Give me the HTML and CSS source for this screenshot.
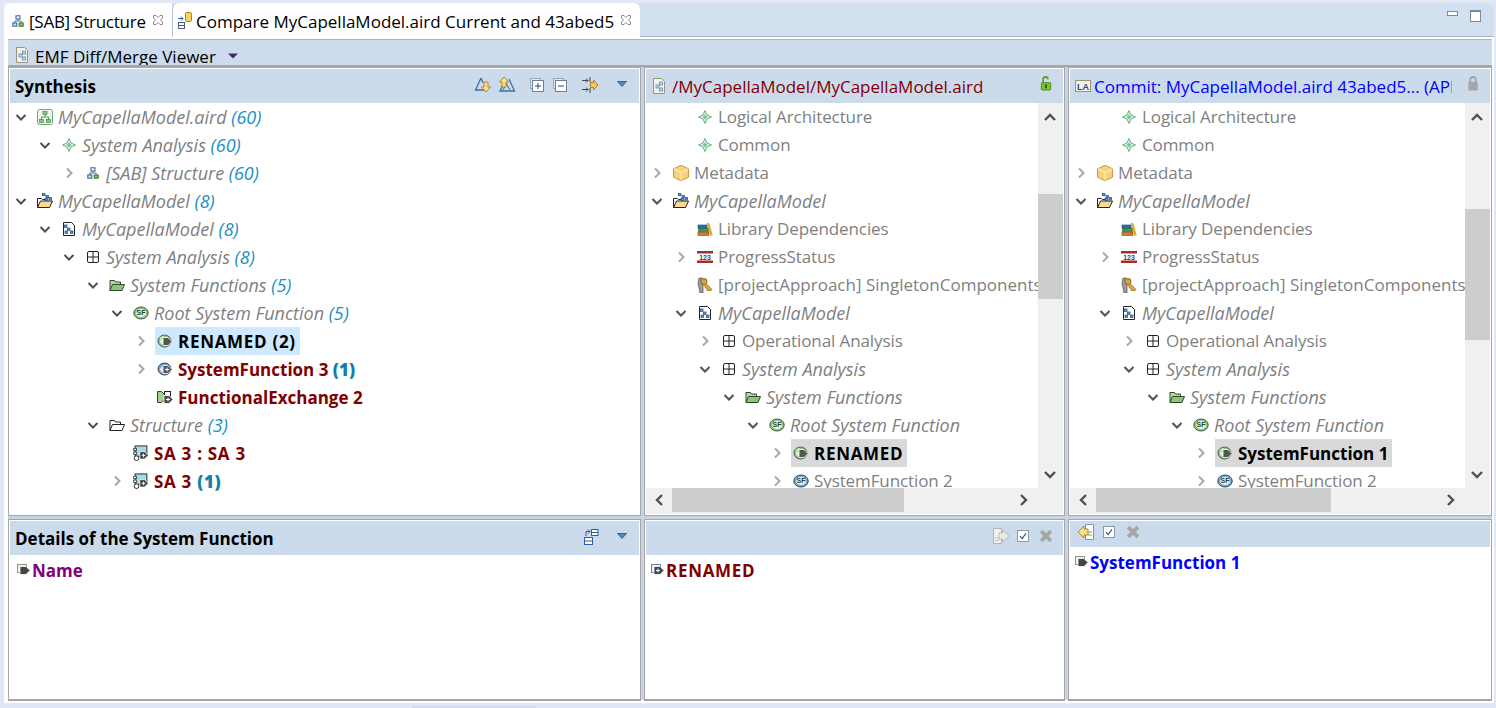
FILE: index.html
```html
<!DOCTYPE html>
<html lang="en">
<head>
    <meta charset="UTF-8">
    <meta name="viewport" content="width=device-width, initial-scale=1.0">
    <title>Compare MyCapellaModel.aird</title>
    <link rel="stylesheet" href="styles.css">
</head>
<body>
<svg class="defs" xmlns="http://www.w3.org/2000/svg">
    <symbol id="tw-open" viewBox="0 0 18 18"><path d="M4.5 7l4.5 4.5L13.5 7" fill="none" stroke="#505050" stroke-width="2"/></symbol>
    <symbol id="tw-closed" viewBox="0 0 18 18"><path d="M7 4.5l4.5 4.5L7 13.5" fill="none" stroke="#a8a8a8" stroke-width="2"/></symbol>
    <symbol id="close" viewBox="0 0 12 12"><path d="M1.5 1.5h2.5L6 3.5l2-2h2.5V4L8.5 6l2 2v2.5H8L6 8.5l-2 2H1.5V8l2-2-2-2z" fill="#fff" stroke="#8a8a8a"/></symbol>
    <symbol id="diagram" viewBox="-2 -2 20 20"><path d="M8 5v3M4 11V8h8v3" fill="none" stroke="#555"/><rect x="5.5" y="1.5" width="5" height="4" fill="#fff" stroke="#2b62a8" stroke-width="1.300"/><rect x="1.5" y="10.5" width="5" height="4" fill="#cfe0f4" stroke="#2b62a8" stroke-width="1.300"/><rect x="9.5" y="10.5" width="5" height="4" fill="#8cc04b" stroke="#3c7a26" stroke-width="1.300"/></symbol>
    <symbol id="compare" viewBox="0 0 16 20"><rect x="8.5" y="1.5" width="6" height="9" rx="1" fill="#f4d35e" stroke="#a8871e"/><rect x="1.5" y="11.5" width="6" height="6" fill="#fff" stroke="#47607e"/><path d="M2 14.5h5" stroke="#47607e"/><path d="M1 7.5h5M4 5.5l2 2-2 2" fill="none" stroke="#2b62a8"/></symbol>
    <symbol id="viewer" viewBox="0 0 16 18"><path d="M2.5 1.5h8l3 3v12h-11z" fill="#f6f3e6" stroke="#9a9478"/><rect x="5" y="8" width="3" height="3" fill="#c3d9ee" stroke="#5c8dbd" stroke-width=".8"/><rect x="8.500" y="5" width="3" height="3" fill="#c3d9ee" stroke="#5c8dbd" stroke-width=".8"/><rect x="8.500" y="11" width="3" height="3" fill="#c3d9ee" stroke="#5c8dbd" stroke-width=".8"/></symbol>
    <symbol id="sync-down" viewBox="0 0 18 18"><path d="M7 2L1.500 14h9" fill="none" stroke="#3a6ea5" stroke-width="1.300"/><path d="M7 2l2 5" stroke="#3a6ea5" stroke-width="1.300"/><path d="M10 6h4v5h2.500L12 16l-4.500-5H10z" fill="#f8dd8a" stroke="#b08a2a"/></symbol>
    <symbol id="sync-up" viewBox="0 0 18 18"><path d="M11 3l5.500 12H2l3-6" fill="none" stroke="#3a6ea5" stroke-width="1.300"/><path d="M8 7L12 14M5 14l4-7" stroke="#3a6ea5"/><path d="M6 1L1.500 6H4v5h4V6h2.500z" fill="#f8dd8a" stroke="#b08a2a"/></symbol>
    <symbol id="expand" viewBox="0 0 14 14"><rect x=".5" y=".5" width="10" height="10" fill="#e6eaf0" stroke="#9aa6b5"/><rect x="2.500" y="2.500" width="11" height="11" fill="#fff" stroke="#6d8097"/><path d="M5 8h6M8 5v6" stroke="#2b4f80"/></symbol>
    <symbol id="collapse" viewBox="0 0 14 14"><rect x=".5" y=".5" width="10" height="10" fill="#e6eaf0" stroke="#9aa6b5"/><rect x="2.500" y="2.500" width="11" height="11" fill="#fff" stroke="#6d8097"/><path d="M5 8h6" stroke="#2b4f80"/></symbol>
    <symbol id="filter-arrows" viewBox="0 0 18 18"><path d="M1 4.500h6M1 13.500h6M9 1v5M9 12v5" stroke="#444" fill="none"/><path d="M5 2.500l2 2-2 2M5 11.500l2 2-2 2" fill="none" stroke="#444"/><path d="M9.500 6.500h3V4l4.500 5-4.500 5v-2.500h-3z" fill="#f4c95d" stroke="#a8821f"/></symbol>
    <symbol id="menu" viewBox="0 0 10 6"><path d="M.5.500h9L5 5.500z" fill="#4f8fc0" stroke="#1f4f78" stroke-width=".8"/></symbol>
    <symbol id="menu-dark" viewBox="0 0 10 6"><path d="M0 .5h10L5 5.500z" fill="#3d2b6b"/></symbol>
    <symbol id="layout" viewBox="0 0 16 18"><rect x="1.500" y="9.500" width="8" height="7" fill="#fff" stroke="#2e5f98"/><path d="M1.500 13h8" stroke="#2e5f98"/><rect x="8.500" y="1.500" width="6.500" height="6" fill="#fff" stroke="#2e5f98"/><path d="M8.500 4.500H15" stroke="#2e5f98"/><path d="M3 8V3.500h4M5 1.500l2 2-2 2" fill="none" stroke="#2e5f98"/></symbol>
    <symbol id="aird" viewBox="1 1 16 16"><rect x="1.500" y="1.500" width="15" height="15" rx="2" fill="#edf6ec" stroke="#6ea86e"/><path d="M9 6v3M5.500 12V9h7v3" fill="none" stroke="#5b995b"/><rect x="7" y="3.500" width="4" height="3" fill="#8cc48c" stroke="#4c8a4c" stroke-width=".7"/><rect x="3.500" y="11.500" width="4" height="3" fill="#8cc48c" stroke="#4c8a4c" stroke-width=".7"/><rect x="10.500" y="11.500" width="4" height="3" fill="#8cc48c" stroke="#4c8a4c" stroke-width=".7"/></symbol>
    <symbol id="diamond" viewBox="0 0 16 16"><path d="M8 1.500l2 4.500 4.500 2-4.500 2-2 4.500-2-4.500-4.500-2L6 6z" fill="#dff3e2" stroke="#66b27c"/><path d="M8 5.500L10.500 8 8 10.500 5.500 8z" fill="#7fc792"/></symbol>
    <symbol id="project" viewBox="1 1 16 16"><path d="M1.500 15.500V6.500h4l1 1h4v2" fill="#fff" stroke="#222"/><path d="M1.500 15.500l3-6.500h12l-3 6.500z" fill="#fbdc8f" stroke="#222"/><g fill="#5a93cc" stroke="#1f4f86" stroke-width=".7"><rect x="6.500" y="1.200" width="2.500" height="2.500"/><rect x="10" y="3.500" width="2.500" height="2.500"/><rect x="13" y="5.500" width="2.500" height="2.500"/><rect x="9" y="6.500" width="2.500" height="2"/></g></symbol>
    <symbol id="model" viewBox="0 0 16 16"><path d="M2.500 1.500h8l3 3v10h-11z" fill="#fff" stroke="#222"/><g fill="#5a93cc" stroke="#1f4f86" stroke-width=".7"><rect x="3.500" y="4" width="2.500" height="2.500"/><rect x="6.500" y="7" width="2.500" height="2.500"/><rect x="4" y="10" width="2.500" height="2.500"/><rect x="9.500" y="10" width="2.500" height="2.500"/></g></symbol>
    <symbol id="grid" viewBox="0 0 16 16"><rect x="2.500" y="2.500" width="11" height="11" rx="1.500" fill="#fff" stroke="#222"/><path d="M8 2v12M2 8h12" stroke="#222"/></symbol>
    <symbol id="folder-green" viewBox="0 0 16 16"><path d="M1 13.500v-10h4.500l1 1.500h5v2" fill="#b7d8a0" stroke="#2e4a2e"/><path d="M1 13.500l2.500-6h12l-2.500 6z" fill="#8fc478" stroke="#2e4a2e"/></symbol>
    <symbol id="folder-white" viewBox="0 0 16 16"><path d="M1 13.500v-10h4.500l1 1.500h5v2" fill="#fff" stroke="#222"/><path d="M1 13.500l2.500-6h12l-2.500 6z" fill="#fff" stroke="#222"/></symbol>
    <symbol id="sf-green" viewBox="0 0 16 16"><ellipse cx="8" cy="8" rx="7.200" ry="6" fill="#8cc47c" stroke="#3a5f3a"/><ellipse cx="8" cy="8" rx="5" ry="4" fill="#eef6ea"/></symbol>
    <symbol id="sf-blue" viewBox="0 0 16 16"><ellipse cx="8" cy="8" rx="7.200" ry="6" fill="#7da4cc" stroke="#2c4560"/><ellipse cx="8" cy="8" rx="5" ry="4" fill="#eef3f8"/></symbol>
    <symbol id="fn-green" viewBox="0 0 16 16"><ellipse cx="7.500" cy="8" rx="6.500" ry="6" fill="#8cc47c" stroke="#4a6a4a"/><path d="M3 5.500a5 4 0 0 1 4-1.500" fill="none" stroke="#d8efcf" stroke-width="1.500"/><ellipse cx="6" cy="8.500" rx="3" ry="2.800" fill="#e4f1dd"/><path d="M6 4.500h5l4 4-4 4H6z" fill="#555" stroke="#fff" stroke-width=".8"/></symbol>
    <symbol id="fn-blue" viewBox="0 0 16 16"><ellipse cx="7.500" cy="8" rx="6.500" ry="6" fill="#7da4cc" stroke="#2c4560"/><ellipse cx="6" cy="8.500" rx="3" ry="2.800" fill="#dfe8f2"/><path d="M6 4.500h5l4 4-4 4H6z" fill="#555" stroke="#fff" stroke-width=".8"/><path d="M8 8.500h4M10 6.500v4" stroke="#fff"/></symbol>
    <symbol id="exchange" viewBox="1 0 16 16"><path d="M1.500 2.500h4l3 3v5l-3 3h-4z" fill="#9fd08c" stroke="#2e4a2e"/><rect x="8.500" y="2.500" width="6" height="6" fill="#fff" stroke="#222"/><path d="M8 6.500h5l4 4-4 4H8z" fill="#444" stroke="#fff" stroke-width=".8"/><path d="M10 10.500h4M12 8.500v4" stroke="#fff"/></symbol>
    <symbol id="actor" viewBox="1 .5 16.500 17"><rect x="3" y="1.500" width="12.500" height="11" fill="#a6dbe0" stroke="#222"/><circle cx="4.500" cy="14.500" r="2.500" fill="#fff" stroke="#222"/><rect x="1.500" y="4" width="3" height="2.500" fill="#fff" stroke="#222" stroke-width=".8"/><rect x="1.500" y="8" width="3" height="2.500" fill="#fff" stroke="#222" stroke-width=".8"/><path d="M8 7.500h5l4 4-4 4H8z" fill="#444" stroke="#fff" stroke-width=".8"/><path d="M10 11.500h4M12 9.500v4" stroke="#fff"/></symbol>
    <symbol id="cube" viewBox="1 1 16 16"><path d="M9 1.300l7.500 3.500v8.400L9 16.700l-7.500-3.500V4.800z" fill="#f6d27c" stroke="#c99a3a"/><path d="M1.500 4.800L9 8.300l7.500-3.500M9 8.300v8.400" fill="none" stroke="#fff2cc"/></symbol>
    <symbol id="books" viewBox="0 0 16 16"><rect x="1" y="11" width="11" height="3.500" fill="#c97a3a" stroke="#7c4a1e" stroke-width=".6"/><rect x="1.500" y="7" width="10" height="3.500" fill="#3f9a58" stroke="#23613a" stroke-width=".6"/><rect x="1" y="4" width="9" height="3" fill="#2f6fb0" stroke="#1e4775" stroke-width=".6"/><path d="M11 2l3.500 12.500" stroke="#e8a72a" stroke-width="2.500"/></symbol>
    <symbol id="num-bars" viewBox="0 0 16 16"><rect y="2" width="16" height="2.500" fill="#a82a2a"/><rect y="11.500" width="16" height="2.500" fill="#a82a2a"/></symbol>
    <symbol id="key" viewBox="1 1 16 16"><path d="M3 2h3l1 4v11H4L2 7z" fill="#9a9a9a" stroke="#555" stroke-width=".7"/><circle cx="8" cy="5.500" r="3" fill="#d9a441" stroke="#8b6414"/><path d="M10 7.500l6 6-2 1.500-1-1-1 1-4-5.500" fill="#d9a441" stroke="#8b6414" stroke-width=".7"/></symbol>
    <symbol id="lock-open" viewBox="0 0 12 16"><path d="M3 7V3.500a2.500 2.500 0 0 1 5 0" fill="none" stroke="#55a01f" stroke-width="1.800"/><rect x="1" y="7" width="10" height="8" rx="1" fill="#7cc22e" stroke="#3f7a12" stroke-width=".8"/><rect x="5" y="9" width="2" height="4" fill="#2f5e0c"/></symbol>
    <symbol id="lock-gray" viewBox="0 0 12 16"><path d="M3 7V4a3 3 0 0 1 6 0v3" fill="none" stroke="#a6a6a6" stroke-width="2"/><rect x="1" y="6" width="10" height="9.500" rx="1.500" fill="#a6a6a6"/></symbol>
    <symbol id="doc-frame" viewBox="0 0 16 12"><rect x=".5" y=".5" width="15" height="11" fill="#f6f3e6" stroke="#9a9478"/></symbol>
    <symbol id="attr" viewBox="0 0 14 12"><rect x=".5" y=".5" width="9" height="8" fill="#eef3f8" stroke="#9a9478"/><path d="M3 2.500h6l4 4-4 4H3z" fill="#444" stroke="#fff" stroke-width=".8"/></symbol>
    <symbol id="attr-plus" viewBox="0 0 14 12"><rect x=".5" y=".5" width="9" height="8" fill="#eef3f8" stroke="#5f86b3"/><path d="M3 2.500h6l4 4-4 4H3z" fill="#444" stroke="#fff" stroke-width=".8"/><path d="M5 6.500h4M7 4.500v4" stroke="#fff"/></symbol>
    <symbol id="copy-right" viewBox="0 0 18 18"><path d="M1.500 1.500h8v15h-8z" fill="#f1f1f1" stroke="#b0b0b0"/><path d="M3 11h4M3 13.500h4" stroke="#c0c0c0"/><path d="M7 6h4V3l6 6-6 6v-3H7z" fill="#ececec" stroke="#b8b8b8"/></symbol>
    <symbol id="copy-left" viewBox="0 0 18 18"><path d="M8.500 1.500h8v15h-8z" fill="#fff" stroke="#8a93a0"/><path d="M11 9h4M11 12h4" stroke="#6fae5a"/><path d="M11 6H7V3L1 9l6 6v-3h4z" fill="#f8dd8a" stroke="#b08a2a"/></symbol>
    <symbol id="check" viewBox="0 0 14 14"><rect x=".5" y=".5" width="13" height="13" fill="#fff" stroke="#7b8ba0"/><path d="M3.500 7l2.500 3 4.500-6" fill="none" stroke="#2b4f80" stroke-width="1.300"/></symbol>
    <symbol id="cross" viewBox="1 1 12 12"><path d="M2.800 2.800l8.400 8.400M11.200 2.800l-8.400 8.400" stroke="#a6a6a6" stroke-width="3.400"/></symbol>
    <symbol id="sb-up" viewBox="0 0 14 10"><path d="M2 8l5-5 5 5" fill="none" stroke="#505050" stroke-width="2.400"/></symbol>
    <symbol id="sb-down" viewBox="0 0 14 10"><path d="M2 2l5 5 5-5" fill="none" stroke="#505050" stroke-width="2.400"/></symbol>
    <symbol id="sb-left" viewBox="0 0 10 14"><path d="M8 2L3 7l5 5" fill="none" stroke="#505050" stroke-width="2.400"/></symbol>
    <symbol id="sb-right" viewBox="0 0 10 14"><path d="M2 2l5 5-5 5" fill="none" stroke="#505050" stroke-width="2.400"/></symbol>
</svg>

<div class="folder">
    <div class="tabbar">
        <div class="tab tab-first">
            <svg class="ic"><use href="#diagram"/></svg>
            <span>[SAB] Structure</span>
            <svg class="tab-close"><use href="#close"/></svg>
        </div>
        <div class="tab tab-active">
            <svg class="ic ic-tall"><use href="#compare"/></svg>
            <span>Compare MyCapellaModel.aird Current and 43abed5</span>
            <svg class="tab-close"><use href="#close"/></svg>
        </div>
        <div class="win-btns">
            <span class="win-min"></span>
            <span class="win-max"></span>
        </div>
    </div>

    <div class="content">
        <div class="toolbar">
            <svg class="ic"><use href="#viewer"/></svg>
            <span class="toolbar-title">EMF Diff/Merge Viewer</span>
            <svg class="toolbar-menu"><use href="#menu-dark"/></svg>
        </div>

        <div class="panes">
            <!-- top left: synthesis -->
            <section class="panel">
                <header class="panel-head">
                    <h2>Synthesis</h2>
                    <div class="head-tools">
                        <svg class="tool t1"><use href="#sync-down"/></svg>
                        <svg class="tool t2"><use href="#sync-up"/></svg>
                        <svg class="tool t3"><use href="#expand"/></svg>
                        <svg class="tool t4"><use href="#collapse"/></svg>
                        <svg class="tool t5"><use href="#filter-arrows"/></svg>
                        <svg class="tool t6"><use href="#menu"/></svg>
                    </div>
                </header>
                <div class="tree">
                    <div class="row d0"><svg class="tw"><use href="#tw-open"/></svg><svg class="ic"><use href="#aird"/></svg><span class="item it">MyCapellaModel.aird <em>(60)</em></span></div>
                    <div class="row d1"><svg class="tw"><use href="#tw-open"/></svg><svg class="ic"><use href="#diamond"/></svg><span class="item it">System Analysis <em>(60)</em></span></div>
                    <div class="row d2"><svg class="tw"><use href="#tw-closed"/></svg><svg class="ic"><use href="#diagram"/></svg><span class="item it">[SAB] Structure <em>(60)</em></span></div>
                    <div class="row d0"><svg class="tw"><use href="#tw-open"/></svg><svg class="ic"><use href="#project"/></svg><span class="item it">MyCapellaModel <em>(8)</em></span></div>
                    <div class="row d1"><svg class="tw"><use href="#tw-open"/></svg><svg class="ic"><use href="#model"/></svg><span class="item it">MyCapellaModel <em>(8)</em></span></div>
                    <div class="row d2"><svg class="tw"><use href="#tw-open"/></svg><svg class="ic"><use href="#grid"/></svg><span class="item it">System Analysis <em>(8)</em></span></div>
                    <div class="row d3"><svg class="tw"><use href="#tw-open"/></svg><svg class="ic"><use href="#folder-green"/></svg><span class="item it">System Functions <em>(5)</em></span></div>
                    <div class="row d4"><svg class="tw"><use href="#tw-open"/></svg><svg class="ic" viewBox="0 0 16 16"><use href="#sf-green"/><text x="8" y="10.300" class="glyph">SF</text></svg><span class="item it">Root System Function <em>(5)</em></span></div>
                    <div class="row d5"><svg class="tw"><use href="#tw-closed"/></svg><div class="sel sel-blue"><svg class="ic"><use href="#fn-green"/></svg><span class="item bold caps">RENAMED (2)</span></div></div>
                    <div class="row d5"><svg class="tw"><use href="#tw-closed"/></svg><svg class="ic"><use href="#fn-blue"/></svg><span class="item bold red">SystemFunction 3 <b>(1)</b></span></div>
                    <div class="row d5"><span class="tw"></span><svg class="ic"><use href="#exchange"/></svg><span class="item bold red">FunctionalExchange 2</span></div>
                    <div class="row d3"><svg class="tw"><use href="#tw-open"/></svg><svg class="ic"><use href="#folder-white"/></svg><span class="item it">Structure <em>(3)</em></span></div>
                    <div class="row d4"><span class="tw"></span><svg class="ic"><use href="#actor"/></svg><span class="item bold red caps">SA 3 : SA 3</span></div>
                    <div class="row d4"><svg class="tw"><use href="#tw-closed"/></svg><svg class="ic"><use href="#actor"/></svg><span class="item bold red caps">SA 3 <b>(1)</b></span></div>
                </div>
            </section>

            <!-- top middle: current model -->
            <section class="panel">
                <header class="panel-head">
                    <svg class="ic head-ic"><use href="#viewer"/></svg>
                    <span class="head-path red">/MyCapellaModel/MyCapellaModel.aird</span>
                    <svg class="head-lock"><use href="#lock-open"/></svg>
                </header>
                <div class="scroller">
                    <div class="tree">
                        <div class="row d1"><span class="tw"></span><svg class="ic"><use href="#diamond"/></svg><span class="item">Logical Architecture</span></div>
                        <div class="row d1"><span class="tw"></span><svg class="ic"><use href="#diamond"/></svg><span class="item">Common</span></div>
                        <div class="row d0"><svg class="tw"><use href="#tw-closed"/></svg><svg class="ic"><use href="#cube"/></svg><span class="item">Metadata</span></div>
                        <div class="row d0"><svg class="tw"><use href="#tw-open"/></svg><svg class="ic"><use href="#project"/></svg><span class="item it">MyCapellaModel</span></div>
                        <div class="row d1"><span class="tw"></span><svg class="ic"><use href="#books"/></svg><span class="item">Library Dependencies</span></div>
                        <div class="row d1"><svg class="tw"><use href="#tw-closed"/></svg><svg class="ic" viewBox="0 0 16 16"><use href="#num-bars"/><text x="8" y="10.500" class="glyph glyph-num">123</text></svg><span class="item">ProgressStatus</span></div>
                        <div class="row d1"><span class="tw"></span><svg class="ic"><use href="#key"/></svg><span class="item item-long">[projectApproach] SingletonComponents : true</span></div>
                        <div class="row d1"><svg class="tw"><use href="#tw-open"/></svg><svg class="ic"><use href="#model"/></svg><span class="item it">MyCapellaModel</span></div>
                        <div class="row d2"><svg class="tw"><use href="#tw-closed"/></svg><svg class="ic"><use href="#grid"/></svg><span class="item">Operational Analysis</span></div>
                        <div class="row d2"><svg class="tw"><use href="#tw-open"/></svg><svg class="ic"><use href="#grid"/></svg><span class="item it">System Analysis</span></div>
                        <div class="row d3"><svg class="tw"><use href="#tw-open"/></svg><svg class="ic"><use href="#folder-green"/></svg><span class="item it">System Functions</span></div>
                        <div class="row d4"><svg class="tw"><use href="#tw-open"/></svg><svg class="ic" viewBox="0 0 16 16"><use href="#sf-green"/><text x="8" y="10.300" class="glyph">SF</text></svg><span class="item it">Root System Function</span></div>
                        <div class="row d5"><svg class="tw"><use href="#tw-closed"/></svg><div class="sel sel-gray"><svg class="ic"><use href="#fn-green"/></svg><span class="item bold caps">RENAMED</span></div></div>
                        <div class="row d5"><svg class="tw"><use href="#tw-closed"/></svg><svg class="ic" viewBox="0 0 16 16"><use href="#sf-blue"/><text x="8" y="10.300" class="glyph">SF</text></svg><span class="item">SystemFunction 2</span></div>
                    </div>
                    <div class="vbar">
                        <svg class="sb-v"><use href="#sb-up"/></svg>
                        <div class="vtrack"><div class="thumb-v thumb-mid"></div></div>
                        <svg class="sb-v"><use href="#sb-down"/></svg>
                    </div>
                    <div class="hbar">
                        <svg class="sb-h"><use href="#sb-left"/></svg>
                        <div class="htrack"><div class="thumb-h thumb-mid-h"></div></div>
                        <svg class="sb-h"><use href="#sb-right"/></svg>
                    </div>
                    <div class="corner"></div>
                </div>
            </section>

            <!-- top right: commit -->
            <section class="panel">
                <header class="panel-head">
                    <svg class="ic head-ic-la" viewBox="0 0 16 12"><use href="#doc-frame"/><text x="8" y="9.500" class="glyph glyph-la">LA</text></svg>
                    <span class="head-path blue">Commit: MyCapellaModel.aird 43abed5... (APPROACH)</span>
                    <svg class="head-lock"><use href="#lock-gray"/></svg>
                </header>
                <div class="scroller">
                    <div class="tree">
                        <div class="row d1"><span class="tw"></span><svg class="ic"><use href="#diamond"/></svg><span class="item">Logical Architecture</span></div>
                        <div class="row d1"><span class="tw"></span><svg class="ic"><use href="#diamond"/></svg><span class="item">Common</span></div>
                        <div class="row d0"><svg class="tw"><use href="#tw-closed"/></svg><svg class="ic"><use href="#cube"/></svg><span class="item">Metadata</span></div>
                        <div class="row d0"><svg class="tw"><use href="#tw-open"/></svg><svg class="ic"><use href="#project"/></svg><span class="item it">MyCapellaModel</span></div>
                        <div class="row d1"><span class="tw"></span><svg class="ic"><use href="#books"/></svg><span class="item">Library Dependencies</span></div>
                        <div class="row d1"><svg class="tw"><use href="#tw-closed"/></svg><svg class="ic" viewBox="0 0 16 16"><use href="#num-bars"/><text x="8" y="10.500" class="glyph glyph-num">123</text></svg><span class="item">ProgressStatus</span></div>
                        <div class="row d1"><span class="tw"></span><svg class="ic"><use href="#key"/></svg><span class="item item-long">[projectApproach] SingletonComponents : true</span></div>
                        <div class="row d1"><svg class="tw"><use href="#tw-open"/></svg><svg class="ic"><use href="#model"/></svg><span class="item it">MyCapellaModel</span></div>
                        <div class="row d2"><svg class="tw"><use href="#tw-closed"/></svg><svg class="ic"><use href="#grid"/></svg><span class="item">Operational Analysis</span></div>
                        <div class="row d2"><svg class="tw"><use href="#tw-open"/></svg><svg class="ic"><use href="#grid"/></svg><span class="item it">System Analysis</span></div>
                        <div class="row d3"><svg class="tw"><use href="#tw-open"/></svg><svg class="ic"><use href="#folder-green"/></svg><span class="item it">System Functions</span></div>
                        <div class="row d4"><svg class="tw"><use href="#tw-open"/></svg><svg class="ic" viewBox="0 0 16 16"><use href="#sf-green"/><text x="8" y="10.300" class="glyph">SF</text></svg><span class="item it">Root System Function</span></div>
                        <div class="row d5"><svg class="tw"><use href="#tw-closed"/></svg><div class="sel sel-gray"><svg class="ic"><use href="#fn-green"/></svg><span class="item bold">SystemFunction 1</span></div></div>
                        <div class="row d5"><svg class="tw"><use href="#tw-closed"/></svg><svg class="ic" viewBox="0 0 16 16"><use href="#sf-blue"/><text x="8" y="10.300" class="glyph">SF</text></svg><span class="item">SystemFunction 2</span></div>
                    </div>
                    <div class="vbar">
                        <svg class="sb-v"><use href="#sb-up"/></svg>
                        <div class="vtrack"><div class="thumb-v thumb-right"></div></div>
                        <svg class="sb-v"><use href="#sb-down"/></svg>
                    </div>
                    <div class="hbar">
                        <svg class="sb-h"><use href="#sb-left"/></svg>
                        <div class="htrack"><div class="thumb-h thumb-right-h"></div></div>
                        <svg class="sb-h"><use href="#sb-right"/></svg>
                    </div>
                    <div class="corner"></div>
                </div>
            </section>

            <!-- bottom row: details -->
            <section class="panel">
                <header class="panel-head">
                    <h2>Details of the System Function</h2>
                    <div class="head-tools">
                        <svg class="tool t7"><use href="#layout"/></svg>
                        <svg class="tool t6"><use href="#menu"/></svg>
                    </div>
                </header>
                <div class="detail detail-first"><svg class="attr"><use href="#attr"/></svg><span class="bold purple">Name</span></div>
            </section>

            <section class="panel">
                <header class="panel-head detail-tools">
                    <svg class="tool t8"><use href="#copy-right"/></svg>
                    <svg class="tool t9"><use href="#check"/></svg>
                    <svg class="tool t10"><use href="#cross"/></svg>
                </header>
                <div class="detail"><svg class="attr"><use href="#attr-plus"/></svg><span class="bold red caps">RENAMED</span></div>
            </section>

            <section class="panel">
                <header class="panel-head panel-head-short">
                    <svg class="tool t8"><use href="#copy-left"/></svg>
                    <svg class="tool t9"><use href="#check"/></svg>
                    <svg class="tool t10"><use href="#cross"/></svg>
                </header>
                <div class="detail"><svg class="attr"><use href="#attr"/></svg><span class="bold blue">SystemFunction 1</span></div>
            </section>
        </div>
    </div>
</div>
<div class="trim"></div>
</body>
</html>
```

FILE: styles.css
```css
html, body { margin: 0; height: 708px; overflow: hidden; }
body { background: #e2e7f6; font-family: "Open Sans", "Noto Sans", sans-serif; font-size: 17px; color: #000; }
svg { display: block; flex: none; }
.defs { position: absolute; width: 0; height: 0; }
.glyph { font-family: "Liberation Sans", sans-serif; font-size: 7px; font-style: normal; font-weight: 700; letter-spacing: 0; fill: #26402a; text-anchor: middle; }
.glyph-num { fill: #444; }
.glyph-la { fill: #1f4f86; font-size: 9px; }

.folder { margin: 3px 2px 0 4px; height: 700px; background: #fff; border-radius: 6px 6px 0 0; display: flex; flex-direction: column; }

/* tabs */
.tabbar { height: 33px; display: flex; align-items: stretch; background: #d2e0f0; border-bottom: 1px solid #a8b6c8; border-radius: 6px 6px 0 0; flex: none; }
.tab { background: #fff; display: flex; align-items: center; height: 34px; padding-top: 2px; box-sizing: border-box; white-space: nowrap; font-size: 17px; position: relative; }
.tab-first { width: 168px; padding-left: 6px; border-radius: 6px 0 0 0; }
.tab-first span { margin-left: 3px; letter-spacing: -.25px; }
.tab-active { width: 468px; padding-left: 4px; border-radius: 6px 6px 0 0; border-left: 1px solid #b5c2d3; }
.tab-active span { margin-left: 3px; }
.tab-close { width: 12px; height: 12px; margin-left: 6px; margin-top: -3px; }
.win-btns { margin-left: auto; display: flex; padding: 7px 13px 0 0; gap: 12px; }
.win-min { width: 9px; height: 3px; border: 1px solid #7d8a9a; background: #fff; margin-top: 1px; }
.win-max { width: 9px; height: 9px; border: 1px solid #7d8a9a; border-top-width: 2px; background: #fff; }

.ic { width: 16px; height: 16px; }
.ic-tall { height: 20px; }

/* content */
.content { flex: 1; min-height: 0; padding: 2px 2px 3px 4px; display: flex; flex-direction: column; }
.toolbar { height: 25px; flex: none; background: #ccdcec; border-top: 1px solid #a8b6c8; border-bottom: 2px solid #a6a6a6; overflow: hidden; display: flex; align-items: flex-start; padding-left: 6px; }
.toolbar .ic { margin-top: 6px; height: 18px; }
.toolbar-title { margin-left: 5px; line-height: 24px; margin-top: 5px; }
.toolbar-menu { width: 10px; height: 6px; margin: 13px 0 0 12px; }

.panes { flex: 1; min-height: 0; display: grid; grid-template-columns: 633px 421px 424px; grid-template-rows: 449px 182px; column-gap: 3px; row-gap: 3px; background: #c6d4e7; }

.panel { background: #fff; border: 1px solid #a6a6a6; padding: 1px; display: flex; flex-direction: column; min-width: 0; min-height: 0; overflow: hidden; }
.panes .panel:nth-child(n+4) { border-bottom-width: 2px; }
.panel-head { height: 34px; flex: none; background: #ccdbec; display: flex; align-items: center; position: relative; padding-left: 5px; }
.panel-head-short { height: 26px; }
.panel-head h2 { margin: 0; font-size: 17px; font-weight: 700; }
.head-tools { margin-left: auto; position: relative; height: 100%; }
.tool { position: absolute; }
.t1, .t2 { width: 18px; height: 18px; top: 7px; }
.t1 { right: 147px; }
.t2 { right: 123px; }
.t3, .t4 { width: 14px; height: 14px; top: 9px; }
.t3 { right: 95px; }
.t4 { right: 72px; }
.t5 { width: 18px; height: 18px; top: 7px; right: 40px; }
.t6 { width: 10px; height: 6px; top: 12px; right: 12px; }
.t7 { width: 16px; height: 18px; top: 7px; right: 40px; }

.detail-tools { justify-content: flex-end; }
.t8 { width: 18px; height: 18px; top: 6px; right: 53px; }
.t9 { width: 12px; height: 12px; top: 9px; right: 34px; }
.t10 { width: 14px; height: 14px; top: 8px; right: 10px; }
.panel-head-short .t8 { top: 2px; left: 7px; right: auto; }
.panel-head-short .t9 { top: 5px; left: 33px; right: auto; }
.panel-head-short .t10 { top: 4px; left: 56px; right: auto; }

.head-ic { height: 18px; }
.head-ic-la { height: 12px; }
.head-path { margin-left: 5px; white-space: nowrap; overflow: hidden; flex: none; }
.panel-head .head-path { width: 314px; }
.panel:nth-child(3) .head-path { width: 358px; margin-left: 3px; }
.head-lock { width: 12px; height: 15px; position: absolute; right: 11px; top: 7px; }

/* trees */
.tree { flex: 1; min-width: 0; min-height: 0; overflow: hidden; }
.row { height: 28px; display: flex; align-items: center; white-space: nowrap; color: #7f7f7f; letter-spacing: -.1px; }
.tw { width: 18px; height: 18px; margin-right: 7px; flex: none; }
.row .ic { margin-right: 5px; }
.item { margin-bottom: 2px; }
.item-long { letter-spacing: 0; }
.item.it { font-style: italic; font-size: 18px; letter-spacing: 0; margin-bottom: 0; }
.item em { color: #1b8fc4; }
.d0 { padding-left: 2px; }
.d1 { padding-left: 26px; }
.d2 { padding-left: 50px; }
.d3 { padding-left: 74px; }
.d4 { padding-left: 98px; }
.d5 { padding-left: 122px; }
.sel { display: flex; align-items: center; height: 28px; margin-left: -2px; padding: 0 4px 0 2px; }
.sel-blue { background: #cde8ff; }
.sel-gray { background: #d9d9d9; }
.bold { font-weight: 700; letter-spacing: 0; }
.item.bold { margin-bottom: 0; }
.caps { letter-spacing: .7px; }
.sel .item { color: #000; }
.red { color: #800000; }
.purple { color: #800080; }
.blue { color: #0000ff; }
.item b { color: #0f7fae; }

/* scrollbars */
.scroller { flex: 1; min-height: 0; display: grid; grid-template-columns: 1fr 25px; grid-template-rows: 1fr 26px; }
.vbar { background: #f0f0f0; display: flex; flex-direction: column; align-items: center; min-height: 0; }
.sb-v { width: 14px; height: 10px; margin: 9px 0 8px; transform: translateX(-1px); }
.vtrack { flex: 1; width: 100%; }
.thumb-v { background: #cdcdcd; }
.thumb-mid { margin-top: 64px; height: 105px; }
.thumb-right { margin-top: 79px; height: 131px; }
.hbar { background: #f0f0f0; display: flex; align-items: flex-start; }
.sb-h { width: 10px; height: 14px; margin: 5px 9px 0 8px; }
.hbar .sb-h:first-child { margin-right: 8px; }
.htrack { flex: 1; }
.thumb-h { background: #cdcdcd; height: 24px; }
.thumb-mid-h { width: 232px; }
.thumb-right-h { width: 235px; }
.corner { background: #f0f0f0; }

/* detail panes */
.detail { display: flex; align-items: center; height: 30px; padding-left: 5px; }
.detail-first { padding-left: 7px; }
.attr { width: 14px; height: 12px; margin-right: 1px; }

.trim { position: absolute; left: 412px; top: 706px; width: 124px; height: 2px; background: #d5dbef; }
```
